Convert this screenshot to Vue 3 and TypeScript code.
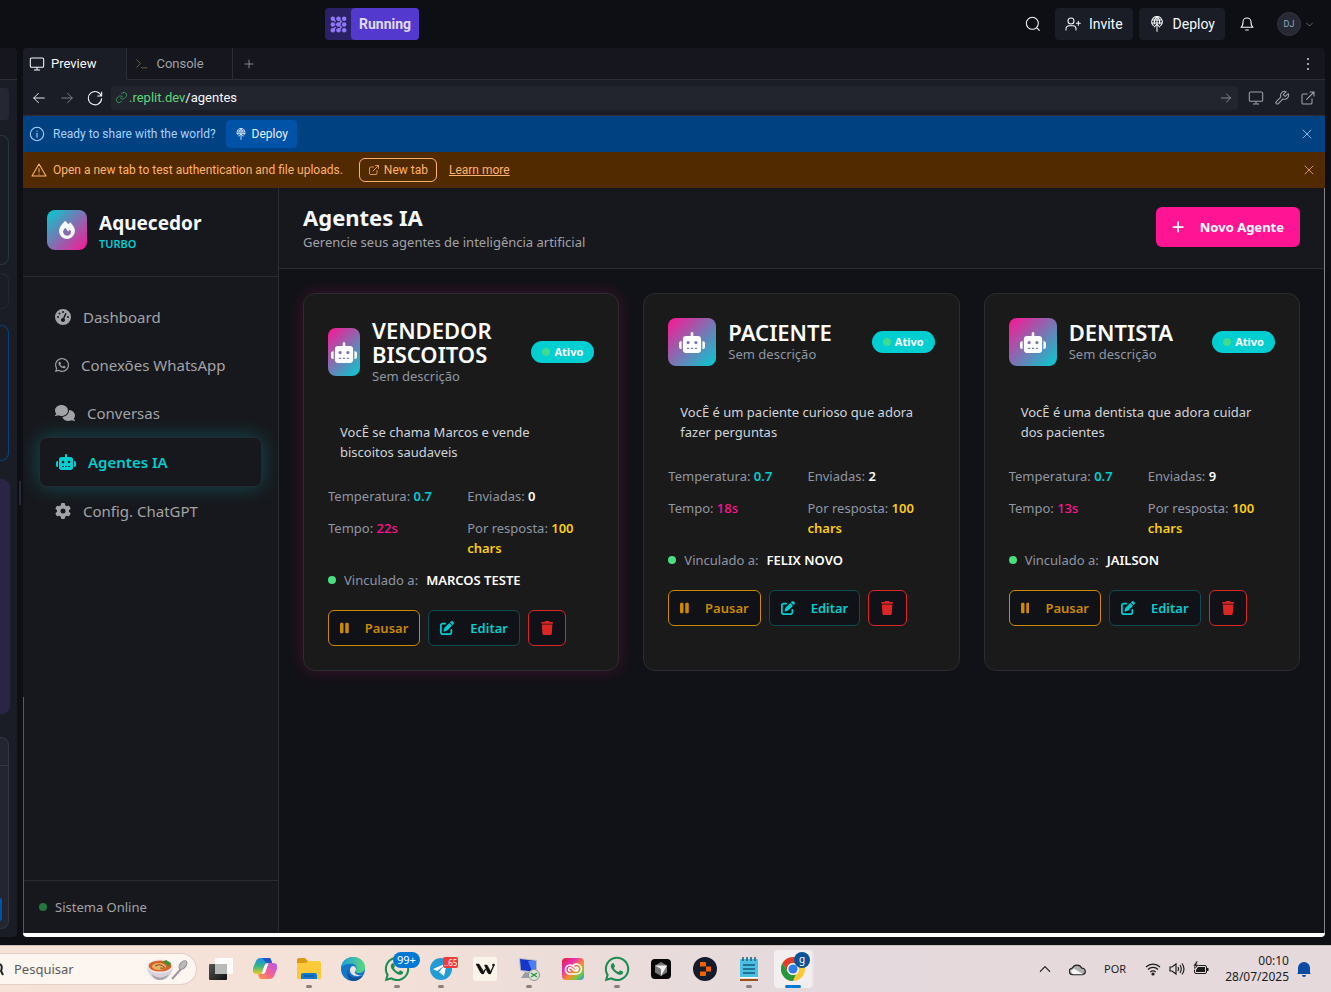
<script setup lang="ts">
import { h, ref } from 'vue'

type IconDef = { w: number; d: string }

const solid: Record<string, IconDef> = {
  robot: { w: 640, d: 'M320 0c17.7 0 32 14.3 32 32V96H472c39.8 0 72 32.2 72 72V440c0 39.8-32.2 72-72 72H168c-39.8 0-72-32.2-72-72V168c0-39.8 32.2-72 72-72H288V32c0-17.7 14.3-32 32-32zM208 384c-8.8 0-16 7.2-16 16s7.2 16 16 16h32c8.8 0 16-7.2 16-16s-7.2-16-16-16H208zm96 0c-8.8 0-16 7.2-16 16s7.2 16 16 16h32c8.8 0 16-7.2 16-16s-7.2-16-16-16H304zm96 0c-8.8 0-16 7.2-16 16s7.2 16 16 16h32c8.8 0 16-7.2 16-16s-7.2-16-16-16H400zM264 256a40 40 0 1 0 -80 0 40 40 0 1 0 80 0zm152 40a40 40 0 1 0 0-80 40 40 0 1 0 0 80zM48 224H64V416H48c-26.5 0-48-21.5-48-48V272c0-26.5 21.5-48 48-48zm544 0c26.5 0 48 21.5 48 48v96c0 26.5-21.5 48-48 48H576V224h16z' },
  whatsapp: { w: 448, d: 'M380.9 97.1C339 55.1 283.2 32 223.9 32c-122.4 0-222 99.6-222 222 0 39.1 10.2 77.3 29.6 111L0 480l117.7-30.9c32.4 17.7 68.9 27 106.1 27h.1c122.3 0 224.1-99.6 224.1-222 0-59.3-25.2-115-67.1-157zm-157 341.6c-33.2 0-65.7-8.9-94-25.7l-6.7-4-69.8 18.3L72 359.2l-4.4-7c-18.5-29.4-28.2-63.3-28.2-98.2 0-101.7 82.8-184.5 184.6-184.5 49.3 0 95.6 19.2 130.4 54.1 34.8 34.9 56.2 81.2 56.1 130.5 0 101.8-84.9 184.6-186.6 184.6zm101.2-138.2c-5.5-2.8-32.8-16.2-37.9-18-5.1-1.9-8.8-2.8-12.5 2.8-3.7 5.6-14.3 18-17.6 21.8-3.2 3.7-6.5 4.2-12 1.4-32.6-16.3-54-29.1-75.5-66-5.7-9.8 5.7-9.1 16.3-30.3 1.8-3.7.9-6.9-.5-9.7-1.4-2.8-12.5-30.1-17.1-41.2-4.5-10.8-9.1-9.3-12.5-9.5-3.2-.2-6.9-.2-10.6-.2-3.7 0-9.7 1.4-14.8 6.9-5.1 5.6-19.4 19-19.4 46.3 0 27.3 19.9 53.7 22.6 57.4 2.8 3.7 39.1 59.7 94.8 83.8 35.2 15.2 49 16.5 66.6 13.9 10.7-1.6 32.8-13.4 37.4-26.4 4.6-13 4.6-24.1 3.2-26.4-1.3-2.5-5-3.9-10.5-6.6z' },
  comments: { w: 640, d: 'M208 352c114.9 0 208-78.8 208-176S322.9 0 208 0S0 78.8 0 176c0 38.6 14.7 74.3 39.6 103.4c-3.5 9.4-8.7 17.7-14.2 24.7c-4.8 6.2-9.7 11-13.3 14.3c-1.8 1.6-3.3 2.9-4.3 3.7c-.5 .4-.9 .7-1.1 .8l-.2 .2C1 327.2-1.4 334.4 .8 340.9S9.1 352 16 352c21.8 0 43.8-5.6 62.1-12.5c9.2-3.5 17.8-7.4 25.3-11.4C134.1 343.3 169.8 352 208 352zM448 176c0 112.3-99.1 196.9-216.5 207C255.8 457.4 336.4 512 432 512c38.2 0 73.9-8.7 104.7-23.9c7.5 4 16 7.9 25.2 11.4c18.3 6.9 40.3 12.5 62.1 12.5c6.9 0 13.1-4.5 15.2-11.1c2.1-6.6-.2-13.8-5.8-17.9l-.2-.2c-.2-.2-.6-.4-1.1-.8c-1-.8-2.5-2-4.3-3.7c-3.6-3.3-8.5-8.1-13.3-14.3c-5.5-7-10.7-15.4-14.2-24.7c24.9-29 39.6-64.7 39.6-103.4c0-92.8-84.9-168.9-192.6-175.5c.4 5.1 .6 10.3 .6 15.5z' },
  gear: { w: 512, d: 'M495.9 166.6c3.2 8.7 .5 18.4-6.4 24.6l-43.3 39.4c1.1 8.3 1.7 16.8 1.7 25.4s-.6 17.1-1.7 25.4l43.3 39.4c6.9 6.2 9.6 15.9 6.4 24.6c-4.4 11.9-9.7 23.3-15.8 34.3l-4.7 8.1c-6.6 11-14 21.4-22.1 31.2c-5.9 7.2-15.7 9.6-24.5 6.8l-55.7-17.7c-13.4 10.3-28.2 18.9-44 25.4l-12.5 57.1c-2 9.1-9 16.3-18.2 17.8c-13.8 2.3-28 3.5-42.5 3.5s-28.7-1.2-42.5-3.5c-9.2-1.5-16.2-8.7-18.2-17.8l-12.5-57.1c-15.8-6.5-30.6-15.1-44-25.4L83.1 425.9c-8.8 2.8-18.6 .3-24.5-6.8c-8.1-9.8-15.5-20.2-22.1-31.2l-4.7-8.1c-6.1-11-11.4-22.4-15.8-34.3c-3.2-8.7-.5-18.4 6.4-24.6l43.3-39.4C64.6 273.1 64 264.6 64 256s.6-17.1 1.7-25.4L22.4 191.2c-6.9-6.2-9.6-15.9-6.4-24.6c4.4-11.9 9.7-23.3 15.8-34.3l4.7-8.1c6.6-11 14-21.4 22.1-31.2c5.9-7.2 15.7-9.6 24.5-6.8l55.7 17.7c13.4-10.3 28.2-18.9 44-25.4l12.5-57.1c2-9.1 9-16.3 18.2-17.8C227.3 1.2 241.5 0 256 0s28.7 1.2 42.5 3.5c9.2 1.5 16.2 8.7 18.2 17.8l12.5 57.1c15.8 6.5 30.6 15.1 44 25.4l55.7-17.7c8.8-2.8 18.6-.3 24.5 6.8c8.1 9.8 15.5 20.2 22.1 31.2l4.7 8.1c6.1 11 11.4 22.4 15.8 34.3zM256 336a80 80 0 1 0 0-160 80 80 0 1 0 0 160z' },
  gauge: { w: 512, d: 'M0 256a256 256 0 1 1 512 0A256 256 0 1 1 0 256zM288 96a32 32 0 1 0 -64 0 32 32 0 1 0 64 0zM256 416c35.3 0 64-28.7 64-64c0-17.4-6.9-33.1-18.1-44.6L366 161.7c5.3-12.1-.2-26.3-12.3-31.6s-26.3 .2-31.6 12.3L257.9 288c-.6 0-1.3 0-1.9 0c-35.3 0-64 28.7-64 64s28.7 64 64 64zM176 144a32 32 0 1 0 -64 0 32 32 0 1 0 64 0zM96 288a32 32 0 1 0 0-64 32 32 0 1 0 0 64zm352-32a32 32 0 1 0 -64 0 32 32 0 1 0 64 0z' },
  plus: { w: 448, d: 'M256 80c0-17.7-14.3-32-32-32s-32 14.3-32 32V224H48c-17.7 0-32 14.3-32 32s14.3 32 32 32H192V432c0 17.7 14.3 32 32 32s32-14.3 32-32V288H400c17.7 0 32-14.3 32-32s-14.3-32-32-32H256V80z' },
  pause: { w: 320, d: 'M48 64C21.5 64 0 85.5 0 112V400c0 26.5 21.5 48 48 48H80c26.5 0 48-21.5 48-48V112c0-26.5-21.5-48-48-48H48zm192 0c-26.5 0-48 21.5-48 48V400c0 26.5 21.5 48 48 48h32c26.5 0 48-21.5 48-48V112c0-26.5-21.5-48-48-48H240z' },
  trash: { w: 448, d: 'M135.2 17.7L128 32H32C14.3 32 0 46.3 0 64S14.3 96 32 96H416c17.7 0 32-14.3 32-32s-14.3-32-32-32H320l-7.2-14.3C307.4 6.8 296.3 0 284.2 0H163.8c-12.1 0-23.2 6.8-28.6 17.7zM416 128H32L53.2 467c1.6 25.3 22.6 45 47.9 45H346.9c25.3 0 46.3-19.7 47.9-45L416 128z' },
  edit: { w: 512, d: 'M471.6 21.7c-21.9-21.9-57.3-21.9-79.2 0L362.3 51.7l97.9 97.9 30.1-30.1c21.9-21.9 21.9-57.3 0-79.2L471.6 21.7zm-299.2 220c-6.1 6.1-10.8 13.6-13.5 21.9l-29.6 88.8c-2.9 8.6-.6 18.1 5.8 24.6s15.9 8.7 24.6 5.8l88.8-29.6c8.2-2.7 15.7-7.4 21.9-13.5L437.7 172.3 339.7 74.3 172.4 241.7zM96 64C43 64 0 107 0 160V416c0 53 43 96 96 96H352c53 0 96-43 96-96V320c0-17.7-14.3-32-32-32s-32 14.3-32 32v96c0 17.7-14.3 32-32 32H96c-17.7 0-32-14.3-32-32V160c0-17.7 14.3-32 32-32h96c17.7 0 32-14.3 32-32s-14.3-32-32-32H96z' },
  fire: { w: 448, d: 'M159.3 5.4c7.8-7.3 19.9-7.2 27.7 .1c27.6 25.9 53.5 53.8 77.7 84c11-14.4 23.5-30.1 37-42.9c7.9-7.4 20.1-7.4 28 .1c34.6 33 63.9 76.6 84.5 118c20.3 40.8 33.8 82.5 33.8 111.9C448 404.2 348.2 512 224 512C98.4 512 0 404.1 0 276.5c0-38.4 17.8-85.3 45.4-131.7C73.3 97.7 112.7 48.6 159.3 5.4zM225.7 416c25.3 0 47.7-7 68.8-21c42.1-29.4 53.4-88.2 28.1-134.4c-4.5-9-16-9.6-22.5-2l-25.2 29.3c-6.6 7.6-18.5 7.4-24.7-.5c-16.5-21-46-58.5-62.8-79.8c-6.3-8-18.3-8.1-24.7-.1c-33.8 42.5-50.8 69.3-50.8 99.4C112 375.4 162.6 416 225.7 416z' },
}

const outline: Record<string, string> = {
  monitor: 'M4 3h16a2 2 0 0 1 2 2v10a2 2 0 0 1-2 2H4a2 2 0 0 1-2-2V5a2 2 0 0 1 2-2zM8 21h8M12 17v4',
  prompt: 'M3 5l7 7-7 7M12 20h10',
  plus: 'M12 4v16M4 12h16',
  back: 'M21 12H3M11 4l-8 8 8 8',
  forward: 'M3 12h18M13 4l8 8-8 8',
  reload: 'M22 3v6h-6M21.500 9A10 10 0 1 0 22 13',
  link: 'M10 13a5 5 0 0 0 7.5.5l3-3a5 5 0 0 0-7-7l-1.8 1.7M14 11a5 5 0 0 0-7.500-.5l-3 3a5 5 0 0 0 7 7l1.700-1.700',
  wrench: 'M14.500 6.300a1 1 0 0 0 0 1.400l1.600 1.600a1 1 0 0 0 1.400 0l3.800-3.800a6 6 0 0 1-7.900 7.900L6.500 20.300a2.100 2.100 0 0 1-3-3l6.900-6.900a6 6 0 0 1 7.900-7.900z',
  external: 'M15 3h6v6M10 14L21 3M18 13v6a2 2 0 0 1-2 2H5a2 2 0 0 1-2-2V8a2 2 0 0 1 2-2h6',
  info: 'M12 2a10 10 0 1 0 0 20 10 10 0 0 0 0-20zM12 11v6M12 7.500v.5',
  warning: 'M12 3L1.500 21h21zM12 10v5M12 18v.5',
  close: 'M4 4l16 16M20 4L4 20',
  search: 'M11 2a9 9 0 1 0 0 18 9 9 0 0 0 0-18zM17.500 17.500l4 4',
  invite: 'M9 3a4.500 4.500 0 1 0 0 9 4.500 4.500 0 0 0 0-9zM1.500 21v-2a4.500 4.500 0 0 1 4.500-4.500h6a4.500 4.500 0 0 1 4.500 4.500v2M20 8v6M17 11h6',
  bell: 'M6 9a6 6 0 0 1 12 0c0 6 3 8 3 8H3s3-2 3-8M10 21h4',
  deploy: 'M6.500 14.500a8 8 0 1 1 11 0M5 6h14M4 10.500h16M12 1c-3 2-4.500 6-4 11M12 1c3 2 4.500 6 4 11M12 1v22M12 12l-4 4.500M12 12l4 4.500',
  chevronDown: 'M4 8l8 8 8-8',
  chevronUp: 'M4 16l8-8 8 8',
}

const Fa = (props: { name: string }) => {
  const icon = solid[props.name]
  return h('svg', { class: 'fa', viewBox: `0 0 ${icon.w} 512`, fill: 'currentColor', 'aria-hidden': 'true' }, [h('path', { d: icon.d })])
}
Fa.props = ['name']

const Line = (props: { name: string }) =>
  h('svg', { class: 'line', viewBox: '0 0 24 24', fill: 'none', stroke: 'currentColor', 'stroke-width': 1.6, 'stroke-linecap': 'round', 'stroke-linejoin': 'round', 'aria-hidden': 'true' }, [h('path', { d: outline[props.name] })])
Line.props = ['name']

const path = ref('/agentes')
const query = ref('')

const nav = [
  { label: 'Dashboard', icon: 'gauge', active: false },
  { label: 'Conexões WhatsApp', icon: 'whatsapp', active: false },
  { label: 'Conversas', icon: 'comments', active: false },
  { label: 'Agentes IA', icon: 'robot', active: true },
  { label: 'Config. ChatGPT', icon: 'gear', active: false },
]

const agents = [
  { name: 'VENDEDOR BISCOITOS', prompt: 'VocÊ se chama Marcos e vende biscoitos saudaveis', sent: 0, delay: '22s', linked: 'MARCOS TESTE', glow: true },
  { name: 'PACIENTE', prompt: 'VocÊ é um paciente curioso que adora fazer perguntas', sent: 2, delay: '18s', linked: 'FELIX NOVO', glow: false },
  { name: 'DENTISTA', prompt: 'VocÊ é uma dentista que adora cuidar dos pacientes', sent: 9, delay: '13s', linked: 'JAILSON', glow: false },
]

const dots = [0, 1, 2, 3, 4, 5, 6, 7, 8].map((i) => ({ x: 3 + (i % 3) * 6, y: 3 + Math.floor(i / 3) * 6 }))
</script>

<template>
  <div class="screen">
    <header class="topbar">
      <div class="run">
        <span class="run-mark">
          <svg viewBox="0 0 18 18" aria-hidden="true">
            <circle v-for="(d, i) in dots" :key="i" :cx="d.x" :cy="d.y" r="2.400" fill="#8f78f5" />
            <path d="M3 3l3 3M9 3l3 3-3 3 3 3-3 3M6 9l3 0M3 15l3-3" stroke="#8f78f5" stroke-width="1.500" fill="none" />
          </svg>
        </span>
        <button class="run-label" type="button">Running</button>
      </div>
      <div class="top-actions">
        <button class="ghost" type="button" aria-label="Search"><Line name="search" /></button>
        <button class="action" type="button"><Line name="invite" />Invite</button>
        <button class="action" type="button"><Line name="deploy" />Deploy</button>
        <button class="ghost bell" type="button" aria-label="Notifications"><Line name="bell" /></button>
        <button class="account" type="button"><span class="avatar">DJ</span><Line name="chevronDown" /></button>
      </div>
    </header>

    <div class="workspace">
      <aside class="strip">
        <div class="strip-head"></div>
        <div class="strip-body">
          <div class="piece field"></div>
          <div class="piece green"></div>
          <div class="piece small"></div>
          <div class="piece blue"></div>
          <div class="piece purple"></div>
          <div class="piece composer"><div class="composer-head"></div><div class="send"></div></div>
        </div>
      </aside>
      <div class="handle"></div>

      <section class="pane">
        <div class="tabs">
          <button class="tab on" type="button"><Line name="monitor" />Preview</button>
          <button class="tab console" type="button"><Line name="prompt" />Console</button>
          <button class="tab-add" type="button" aria-label="New tab"><Line name="plus" /></button>
          <button class="tab-more" type="button" aria-label="More">
            <svg viewBox="0 0 16 16" fill="currentColor"><rect x="7" y="2" width="2" height="2" /><rect x="7" y="7" width="2" height="2" /><rect x="7" y="12" width="2" height="2" /></svg>
          </button>
        </div>

        <div class="toolbar">
          <button class="tool" type="button" aria-label="Back"><Line name="back" /></button>
          <button class="tool dim" type="button" aria-label="Forward"><Line name="forward" /></button>
          <button class="tool reload" type="button" aria-label="Reload"><Line name="reload" /></button>
          <div class="address">
            <Line name="link" />
            <label for="address-path">.replit.dev</label>
            <input id="address-path" v-model="path" type="text" />
            <button class="go" type="button" aria-label="Go"><Line name="forward" /></button>
          </div>
          <button class="tool end" type="button" aria-label="Device"><Line name="monitor" /></button>
          <button class="tool end" type="button" aria-label="Tools"><Line name="wrench" /></button>
          <button class="tool end" type="button" aria-label="Open"><Line name="external" /></button>
        </div>

        <div class="banner info">
          <Line name="info" />
          <span>Ready to share with the world?</span>
          <button class="banner-deploy" type="button"><Line name="deploy" />Deploy</button>
          <button class="dismiss" type="button" aria-label="Close"><Line name="close" /></button>
        </div>
        <div class="banner warn">
          <Line name="warning" />
          <span>Open a new tab to test authentication and file uploads.</span>
          <button class="banner-tab" type="button"><Line name="external" />New tab</button>
          <a href="#">Learn more</a>
          <button class="dismiss" type="button" aria-label="Close"><Line name="close" /></button>
        </div>

        <div class="app">
          <aside class="sidebar">
            <div class="brand">
              <div class="brand-mark"><Fa name="fire" /></div>
              <div>
                <div class="brand-name">Aquecedor</div>
                <div class="brand-sub">TURBO</div>
              </div>
            </div>
            <nav class="nav">
              <a v-for="item in nav" :key="item.label" href="#" class="nav-item" :class="{ active: item.active }">
                <Fa :name="item.icon" />{{ item.label }}
              </a>
            </nav>
            <div class="status"><span class="dot"></span>Sistema Online</div>
          </aside>

          <main class="main">
            <div class="page-head">
              <div>
                <h1>Agentes IA</h1>
                <p>Gerencie seus agentes de inteligência artificial</p>
              </div>
              <button class="new" type="button"><Fa name="plus" />Novo Agente</button>
            </div>
            <div class="cards">
              <article v-for="a in agents" :key="a.name" class="card" :class="{ glow: a.glow }">
                <div class="card-head">
                  <div class="bot"><Fa name="robot" /></div>
                  <div class="card-title">
                    <h2>{{ a.name }}</h2>
                    <p>Sem descrição</p>
                  </div>
                  <span class="badge"><span class="dot"></span>Ativo</span>
                </div>
                <p class="prompt">{{ a.prompt }}</p>
                <div class="stats">
                  <div>Temperatura: <b class="teal">0.7</b></div>
                  <div>Enviadas: <b>{{ a.sent }}</b></div>
                  <div>Tempo: <b class="pink">{{ a.delay }}</b></div>
                  <div>Por resposta: <b class="gold">100</b> <b class="gold">chars</b></div>
                </div>
                <div class="linked"><span class="dot"></span>Vinculado a: <b>{{ a.linked }}</b></div>
                <div class="buttons">
                  <button class="btn pausar" type="button"><Fa name="pause" />Pausar</button>
                  <button class="btn editar" type="button"><Fa name="edit" />Editar</button>
                  <button class="btn remove" type="button" aria-label="Excluir"><Fa name="trash" /></button>
                </div>
              </article>
            </div>
          </main>
        </div>
      </section>
    </div>

    <footer class="taskbar">
      <div class="find">
        <svg class="lens" viewBox="0 0 4 16" aria-hidden="true"><path d="M0 3q3 2 1 7l2 4" stroke="#222" stroke-width="2" fill="none" /></svg>
        <input v-model="query" type="text" placeholder="Pesquisar" aria-label="Pesquisar" />
        <svg class="soup" viewBox="0 0 42 24" aria-hidden="true">
          <path d="M1 9c0 8 6 14 13 14s13-6 13-14z" fill="#d8d3da" />
          <path d="M6 17c3 4 12 5 17 0-2 4-5 6-9 6s-7-2-8-6z" fill="#a9a3b0" />
          <ellipse cx="14" cy="9" rx="13" ry="7" fill="#f0edf0" />
          <ellipse cx="14" cy="9" rx="11.500" ry="5.500" fill="#d9622a" />
          <ellipse cx="13" cy="9.500" rx="7" ry="3.500" fill="#e8b268" />
          <path d="M9 9q4-3 8 0t-3 2" stroke="#8b4a1d" fill="none" />
          <path d="M16 5l4-2 5 3-2 4-3-3z" fill="#4c8b33" />
          <path d="M26 22l9-10" stroke="#9b989c" stroke-width="2" />
          <ellipse cx="37" cy="8" rx="3" ry="5" transform="rotate(40 37 8)" fill="#bcb8bc" stroke="#8e8b90" />
        </svg>
      </div>
      <div class="dock">
        <button class="dock-item" type="button" aria-label="Task view">
          <svg viewBox="0 0 24 24"><defs><linearGradient id="tv" x2="1" y2="1"><stop stop-color="#555" /><stop offset="1" stop-color="#111" /></linearGradient></defs><rect y="7" width="18" height="16" rx="1" fill="url(#tv)" /><rect x="6" y="1" width="18" height="16" rx="1" fill="#fff" opacity=".9" /><rect x="6" y="7" width="12" height="10" fill="#b9b9b9" /></svg>
        </button>
        <button class="dock-item" type="button" aria-label="Copilot">
          <svg viewBox="0 0 24 24">
            <defs>
              <linearGradient id="ca" x2="0" y2="1"><stop stop-color="#1a8df0" /><stop offset=".5" stop-color="#35b58a" /><stop offset="1" stop-color="#f2cf1d" /></linearGradient>
              <linearGradient id="cb" x1="1" x2="0" y2="1"><stop stop-color="#b05cf0" /><stop offset=".5" stop-color="#ef5f9a" /><stop offset="1" stop-color="#ff9a3c" /></linearGradient>
            </defs>
            <path d="M8 1h8c2 0 2 2 3 5h-4c-2 0-3 1-4 4l-2 6c-1 2-3 1-5 1-4 0-5-3-4-6l3-7c1-2 2-3 5-3z" fill="url(#ca)" />
            <path d="M9 1h7c2 0 2 2 3 5h-4c-3 0-3-3-6-5z" fill="#1f55c8" />
            <path d="M16 22H8c-2 0-2-2-3-5h4c2 0 3-1 4-4l2-6c1-2 3-1 5-1 4 0 5 3 4 6l-3 7c-1 2-2 3-5 3z" fill="url(#cb)" />
            <path d="M10 13l2-5 3-1-3 9-3 1z" fill="#fff" />
          </svg>
        </button>
        <button class="dock-item open" type="button" aria-label="Explorer">
          <svg viewBox="0 0 24 24"><path d="M0 3a2 2 0 0 1 2-2h6l3 3h11v6H0z" fill="#d99a12" /><path d="M0 6h9l2-2h11a2 2 0 0 1 2 2v16H0z" fill="#fcc93a" /><path d="M4 22v-4a2 2 0 0 1 2-2h12a2 2 0 0 1 2 2v4z" fill="#1578c8" /><path d="M7 19h10" stroke="#0b4f94" /></svg>
        </button>
        <button class="dock-item" type="button" aria-label="Edge">
          <svg viewBox="0 0 24 24">
            <defs><linearGradient id="eg" x2="1"><stop stop-color="#1c9ee0" /><stop offset="1" stop-color="#5bd97a" /></linearGradient></defs>
            <circle cx="12" cy="12" r="12" fill="#1576c6" />
            <path d="M0 12C0 5 5 0 12 0s12 5 12 10c0 4-3 6-6 6-4 0-4-2-3-3 2-4-2-7-6-6-5 0-9 2-9 5z" fill="url(#eg)" />
            <path d="M8 11c-3 6 3 11 9 9 2 0 4-1 5-2-2 4-6 6-10 6C6 24 5 13 8 11z" fill="#124e94" />
            <path d="M12 9c-4 1-4 7 0 9 3 2 7 1 10 0-3 1-7 0-8-2-1-1 1-2 1-4 0-1-1-3-3-3z" fill="#eee3df" />
          </svg>
        </button>
        <button class="dock-item open" type="button" aria-label="WhatsApp">
          <Fa name="whatsapp" class="wa" /><span class="count">99+</span>
        </button>
        <button class="dock-item open" type="button" aria-label="Telegram">
          <svg viewBox="0 0 24 24"><circle cx="12" cy="12" r="11" fill="#239bd4" /><path d="M4 12l14-6-3 13-5-4 5-6-7 5z" fill="#fff" /></svg>
          <span class="count red">..65</span>
        </button>
        <button class="dock-item" type="button" aria-label="W">
          <svg viewBox="0 0 24 24"><rect width="24" height="24" rx="2" fill="#faf4ea" /><path d="M3 7h3l5 8-1 2c-1 0-2-.5-2.500-1.500zM11.500 8H14l4 7-1 2c-1 0-2-.5-2.500-1.500z" fill="#111" stroke="#111" stroke-width=".5" /><path d="M10 17l2.500-5M17 17l3.500-8" stroke="#111" stroke-width="1.300" /><circle cx="20.500" cy="8" r="1.300" fill="#111" /></svg>
        </button>
        <button class="dock-item open" type="button" aria-label="Remote desktop">
          <svg viewBox="0 0 24 24"><path d="M2 1l18 2v13L3 14z" fill="#b9bcc6" /><path d="M3 2l16 2v11L4 13z" fill="#1536c8" /><path d="M11 4l8 0v11l-4-1z" fill="#4a7df0" /><path d="M8 15l6 1 1 5H4z" fill="#9a9da6" /><circle cx="17" cy="18" r="5.500" fill="#dfe3df" stroke="#8c938c" /><path d="M14 16l3 2-3 2M20 16l-3 2 3 2" stroke="#349a3e" fill="none" stroke-width="1.500" /></svg>
        </button>
        <button class="dock-item" type="button" aria-label="Creative Cloud">
          <svg viewBox="0 0 24 24"><defs><linearGradient id="cc" x2="1" y2="1"><stop stop-color="#e8202a" /><stop offset=".3" stop-color="#e62db0" /><stop offset=".6" stop-color="#f5922a" /><stop offset=".8" stop-color="#6ccb4a" /><stop offset="1" stop-color="#2d8cf0" /></linearGradient></defs><rect x="1" y="1" width="22" height="22" rx="4" fill="url(#cc)" /><path d="M9 17a4.500 4.500 0 0 1 0-9c2 0 3 1 4.500 2.500l3 3M9 17h6.500a5 5 0 1 0-4-8M9 14a1.800 1.800 0 0 1 0-3.500c2 0 3 3.500 6 3.500a2 2 0 0 0 0-4" stroke="#fff" stroke-width="1.600" fill="none" stroke-linecap="round" /></svg>
        </button>
        <button class="dock-item open" type="button" aria-label="WhatsApp 2"><Fa name="whatsapp" class="wa" /></button>
        <button class="dock-item" type="button" aria-label="Cursor">
          <svg viewBox="0 0 24 24"><rect x="2" y="2" width="20" height="20" rx="4" fill="#080808" /><path d="M12 5l6 3.500v7L12 19l-6-3.500v-7z" fill="#777" /><path d="M6 8.500h12L12 19v-7z" fill="#f0f0f0" /></svg>
        </button>
        <button class="dock-item" type="button" aria-label="Replit">
          <svg viewBox="0 0 24 24"><circle cx="12" cy="12" r="12" fill="#141b2b" /><path d="M7 5h5a1 1 0 0 1 1 1v3.500H7zM13 9.500h5v5h-5zM7 14.500h6V18a1 1 0 0 1-1 1H7z" fill="#f26207" /></svg>
        </button>
        <button class="dock-item open" type="button" aria-label="Notepad">
          <svg viewBox="0 0 24 24"><rect x="3" y="2" width="18" height="19" rx="1" fill="#4cc0e2" /><path d="M6 0v4M10 0v4M14 0v4M18 0v4" stroke="#1b5f7c" stroke-width="1.500" /><path d="M6 8h12M6 12h12M6 16h12" stroke="#13597a" stroke-width="1.500" /><path d="M3 20h18v1H3z" fill="#fff" /><path d="M3 22h18v2H3z" fill="#9c5117" /></svg>
        </button>
        <button class="dock-item current" type="button" aria-label="Chrome">
          <svg viewBox="0 0 24 24"><circle cx="12" cy="12" r="12" fill="#fcc934" /><path d="M12 0a12 12 0 0 1 10.400 6H12a6 6 0 0 0-5.200 9L1.600 6A12 12 0 0 1 12 0z" fill="#e33b2e" /><path d="M1.600 6l5.200 9a6 6 0 0 0 5.200 3l2.600-.6L12 24A12 12 0 0 1 1.600 6z" fill="#27973f" /><circle cx="12" cy="12" r="6" fill="#fff" /><circle cx="12" cy="12" r="4.600" fill="#2f7bea" /></svg>
          <span class="count profile">g</span>
        </button>
      </div>
      <div class="tray">
        <button class="tray-btn" type="button" aria-label="Mostrar ícones"><Line name="chevronUp" class="up" /></button>
        <svg class="cloud" viewBox="0 0 18 14" aria-hidden="true"><path d="M4 13a3.500 3.500 0 0 1-.500-7A5.500 5.500 0 0 1 13.500 6a3.500 3.500 0 0 1 .5 7z" fill="#aeaeae" stroke="#222" stroke-width="1.300" /><path d="M2 9l3-2.500 10 6H4z" fill="#f6f6f6" /></svg>
        <span class="lang">POR</span>
        <div class="net">
          <svg viewBox="0 0 16 16" fill="none" stroke="#1c1c1c" stroke-width="1.200" aria-hidden="true"><path d="M1 6a10 10 0 0 1 14 0M3 8.500a7 7 0 0 1 10 0M5.300 11a4 4 0 0 1 5.400 0" /><circle cx="8" cy="13" r="1" fill="#1c1c1c" /></svg>
          <svg viewBox="0 0 16 16" fill="none" stroke="#1c1c1c" stroke-width="1.200" aria-hidden="true"><path d="M1 6v4h2l4 3V3L3 6zM9 6q1 2 0 4M11 4q2.500 4 0 8M13 2.500q4 5.500 0 11" /></svg>
          <svg viewBox="0 0 16 16" aria-hidden="true"><rect x="1.500" y="4.500" width="12" height="8" rx="1.500" fill="none" stroke="#1c1c1c" /><path d="M5 6h7v5H3V9z" fill="#1c1c1c" /><path d="M14 7h1.500v3H14z" fill="#1c1c1c" /><path d="M3.500 0L0 5h2.500L1 9l5-5.500H3.500L5 0z" fill="#1c1c1c" stroke="#e6d9dc" stroke-width=".5" /></svg>
        </div>
        <div class="clock"><span>00:10</span><span>28/07/2025</span></div>
        <svg class="alert" viewBox="0 0 16 16" aria-hidden="true"><path d="M2 12V7a6 6 0 0 1 12 0v5l1 1H1zM6 14h4a2 2 0 0 1-4 0z" fill="#0a4aa0" /></svg>
      </div>
    </footer>
  </div>
</template>

<style>
html,
body {
  margin: 0;
  background: #0e0e15;
}
</style>

<style scoped>
.screen {
  display: flex;
  flex-direction: column;
  min-height: 100vh;
  background: #0e0e15;
  color: #f5f9fc;
  font: 13px/20px 'Noto Sans', 'Open Sans', sans-serif;
  overflow: hidden;
}
.screen *,
.screen *::before,
.screen *::after {
  box-sizing: border-box;
}
button,
input {
  margin: 0;
  padding: 0;
  border: 0;
  background: none;
  color: inherit;
  font: inherit;
  outline: none;
}
button {
  display: flex;
  align-items: center;
  justify-content: center;
  flex: none;
}
h1,
h2,
p {
  margin: 0;
}
svg {
  flex: none;
  display: block;
}
.line {
  width: 16px;
  height: 16px;
}
.dot {
  width: 8px;
  height: 8px;
  border-radius: 50%;
  background: #4ade80;
  flex: none;
}

/* Top bar */
.topbar {
  display: flex;
  align-items: center;
  justify-content: space-between;
  height: 48px;
  padding: 0 17px 0 325px;
  font-family: Roboto, sans-serif;
}
.run {
  display: flex;
  height: 32px;
  border-radius: 4px;
  background: #2b2166;
}
.run-mark {
  display: flex;
  align-items: center;
  padding: 0 4px 0 5px;
}
.run-mark svg {
  width: 17px;
  height: 17px;
}
.run-label {
  padding: 0 8px;
  border-radius: 4px;
  background: #5339cd;
  color: #e0daff;
  font-size: 14px;
  font-weight: 700;
}
.top-actions {
  display: flex;
  align-items: center;
  gap: 6px;
}
.ghost {
  width: 32px;
  height: 32px;
}
.action {
  height: 32px;
  padding: 0 10px;
  gap: 8px;
  border-radius: 4px;
  background: #1a1d25;
  font-size: 14px;
}
.bell {
  margin-right: 8px;
}
.account {
  gap: 4px;
  color: #9da2a6;
}
.account .line {
  width: 9px;
  height: 9px;
}
.avatar {
  width: 24px;
  height: 24px;
  border: 1px solid #34363f;
  border-radius: 50%;
  background: #262833;
  color: #92a7bd;
  font-size: 9px;
  line-height: 22px;
}

/* Workspace */
.workspace {
  display: flex;
  flex: 1;
  padding: 0 6px 8px 0;
}
.strip {
  display: flex;
  flex-direction: column;
  width: 17px;
  border-radius: 0 4px 4px 0;
  background: #1a1d26;
  overflow: hidden;
}
.strip-head {
  height: 32px;
  border-bottom: 1px solid #2b2e39;
  background: #15161e;
}
.strip-body {
  display: flex;
  flex: 1;
  flex-direction: column;
  align-items: flex-start;
  padding: 8px 0;
}
.piece {
  width: 9px;
  border: 1px solid #252833;
  border-left: 0;
  border-radius: 0 8px 8px 0;
}
.field {
  height: 32px;
  background: #252832;
  border-radius: 0 4px 4px 0;
}
.green {
  height: 130px;
  margin-top: 15px;
  border-color: #26393a;
}
.small {
  height: 36px;
  margin-top: 8px;
}
.blue {
  height: 136px;
  margin-top: 16px;
  border-color: #07417c;
}
.purple {
  width: 10px;
  height: 235px;
  margin-top: 18px;
  border: 0;
  background: #2a2547;
}
.composer {
  display: flex;
  flex: 1;
  flex-direction: column;
  justify-content: space-between;
  margin-top: 23px;
  padding-bottom: 7px;
  border-color: #343844;
  background: #232630;
}
.composer-head {
  height: 28px;
  border-bottom: 1px solid #343844;
}
.send {
  width: 2px;
  height: 23px;
  border-radius: 0 4px 4px 0;
  background: #0053a6;
}
.handle {
  align-self: center;
  width: 2px;
  height: 24px;
  margin: 0 2px;
  background: #262833;
}
.pane {
  position: relative;
  display: flex;
  flex: 1;
  flex-direction: column;
  min-width: 0;
  border-radius: 4px;
  border-bottom: 4px solid #fff;
  overflow: hidden;
}
.pane::before {
  content: '';
  position: absolute;
  z-index: 1;
  bottom: 0;
  left: 0;
  width: 1px;
  height: 236px;
  background: #595a5d;
}

/* Tabs and address row */
.tabs,
.toolbar,
.banner {
  font-family: Roboto, sans-serif;
}
.tabs {
  display: flex;
  height: 32px;
  background: #15161e;
  color: #9da2a6;
}
.tab {
  gap: 6px;
  padding: 0 28px 0 6px;
  border-right: 1px solid #2b2e39;
  border-bottom: 1px solid #2b2e39;
  font-size: 13px;
}
.tab.on {
  padding-right: 30px;
  border-bottom-color: #1a1d26;
  background: #1a1d26;
  color: #f5f9fc;
}
.console {
  padding-left: 8px;
  gap: 8px;
}
.console .line {
  width: 13px;
  height: 13px;
  color: #766b45;
}
.tab-add {
  width: 32px;
  border-bottom: 1px solid #2b2e39;
}
.tab-add .line {
  width: 12px;
  height: 12px;
}
.tab-more {
  flex: 1;
  justify-content: flex-end;
  padding-right: 9px;
  border-bottom: 1px solid #2b2e39;
}
.tab-more svg {
  width: 16px;
  height: 16px;
}
.toolbar {
  display: flex;
  align-items: center;
  height: 36px;
  padding: 0 9px 0 8px;
  border-bottom: 1px solid #2b2e39;
  background: #1a1d26;
}
.tool {
  width: 16px;
  height: 24px;
  margin-right: 12px;
}
.tool .line {
  width: 14px;
  height: 14px;
}
.tool.dim {
  color: #82868e;
}
.tool.reload {
  margin-right: 8px;
}
.tool.reload .line {
  width: 16px;
  height: 16px;
}
.tool.end {
  margin: 0 0 0 10px;
  color: #9da2a6;
}
.tool.end .line {
  width: 16px;
  height: 16px;
}
.address {
  display: flex;
  flex: 1;
  align-items: center;
  height: 24px;
  padding: 0 6px 0 4px;
  border-radius: 4px;
  background: #22252e;
  font-size: 13px;
}
.address > .line {
  width: 13px;
  height: 13px;
  margin-right: 1px;
  color: #3fa35b;
}
.address label {
  color: #5fd57c;
}
.address input {
  flex: 1;
  min-width: 0;
}
.go .line {
  width: 12px;
  height: 12px;
  color: #9da2a6;
}

/* Banners */
.banner {
  display: flex;
  align-items: center;
  height: 36px;
  padding: 0 12px 0 6px;
  font-size: 12px;
}
.banner > .line {
  width: 16px;
  height: 16px;
  margin-right: 8px;
}
.info {
  background: #004182;
  color: #a8d2ff;
}
.warn {
  padding: 0 10px 0 8px;
  background: #522a00;
  color: #ffb36b;
}
.warn > .line {
  margin-right: 6px;
}
.banner-deploy {
  height: 28px;
  margin-left: 10px;
  padding: 0 9px;
  gap: 5px;
  border-radius: 4px;
  background: #0053a6;
  color: #e6f2ff;
}
.banner-deploy .line,
.banner-tab .line {
  width: 12px;
  height: 12px;
}
.banner-tab {
  height: 24px;
  margin: 0 12px 0 16px;
  padding: 0 8px;
  gap: 4px;
  border: 1px solid #ffb36b;
  border-radius: 6px;
}
.banner a {
  color: inherit;
}
.dismiss {
  margin-left: auto;
}
.dismiss .line {
  width: 12px;
  height: 12px;
}

/* Embedded application */
.app {
  display: flex;
  flex: 1;
  border-right: 1px solid #85868a;
  background: #111217;
}
.sidebar {
  display: flex;
  flex-direction: column;
  width: 256px;
  border-right: 1px solid #2a2c33;
  background: #17181d;
}
.brand {
  display: flex;
  gap: 12px;
  padding: 22px 24px 24px;
  border-bottom: 1px solid #2a2c33;
}
.brand-mark {
  display: flex;
  align-items: center;
  justify-content: center;
  width: 40px;
  height: 40px;
  border-radius: 8px;
  background: linear-gradient(135deg, #00ced1, #ff1493);
}
.brand-mark .fa {
  width: 16px;
  height: 18px;
}
.brand-name {
  font-size: 19px;
  font-weight: 700;
  line-height: 26px;
}
.brand-sub {
  color: #00ced1;
  font-size: 11px;
  font-weight: 600;
  line-height: 16px;
}
.nav {
  display: flex;
  flex: 1;
  flex-direction: column;
  padding: 16px;
}
.nav-item {
  display: flex;
  align-items: center;
  gap: 12px;
  height: 48px;
  padding: 0 16px;
  color: #a2a3a6;
  font-size: 15px;
  text-decoration: none;
}
.nav-item .fa {
  height: 16px;
}
.nav-item.active {
  height: 50px;
  border: 1px solid #262a30;
  border-radius: 8px;
  background: #17181d;
  box-shadow: 0 0 20px rgba(0, 206, 209, 0.3);
  color: #00ced1;
  font-weight: 600;
}
.status {
  display: flex;
  align-items: center;
  gap: 8px;
  padding: 16px;
  border-top: 1px solid #2a2c33;
  color: #a2a3a6;
}
.status .dot {
  background: #22783f;
}
.main {
  flex: 1;
  min-width: 0;
}
.page-head {
  display: flex;
  align-items: center;
  justify-content: space-between;
  padding: 14px 24px 16px;
  border-bottom: 1px solid #2a2c33;
  background: #17181d;
}
.page-head h1 {
  font-size: 22px;
  font-weight: 700;
  line-height: 30px;
}
.page-head p {
  color: #a2a3a6;
}
.new {
  height: 40px;
  padding: 0 16px;
  gap: 16px;
  border-radius: 6px;
  background: #ff1493;
  color: #fff;
  font-weight: 700;
}
.new .fa {
  height: 14px;
}
.cards {
  display: grid;
  grid-template-columns: repeat(3, minmax(0, 1fr));
  gap: 24px;
  padding: 24px;
}
.card {
  padding: 24px;
  border: 1px solid #2c2d2f;
  border-radius: 12px;
  background: #1a1a1a;
  color: #8f96a3;
}
.card.glow {
  box-shadow: 0 0 16px rgba(255, 20, 147, 0.2);
}
.card-head {
  display: flex;
  align-items: center;
}
.bot {
  display: flex;
  align-items: center;
  justify-content: center;
  width: 48px;
  min-width: 32px;
  height: 48px;
  margin-right: 12px;
  border-radius: 8px;
  background: linear-gradient(135deg, #ff1493, #00ced1);
  color: #fff;
}
.glow .bot {
  width: 32px;
}
.bot .fa {
  width: 26px;
  height: 21px;
}
.card-title {
  flex: 1;
  min-width: 0;
}
.card-title h2 {
  color: #fff;
  font-size: 22px;
  font-weight: 600;
  line-height: 24px;
}
.badge {
  display: flex;
  align-items: center;
  gap: 4px;
  height: 22px;
  padding: 0 11px;
  border-radius: 11px;
  background: #00ced1;
  color: #fff;
  font-size: 11px;
  font-weight: 700;
}
.badge .dot {
  background: #3edb90;
}
.prompt {
  margin-top: 24px;
  padding: 12px;
  color: #d1d5db;
}
.stats {
  display: grid;
  grid-template-columns: 1fr 1fr;
  gap: 12px;
  margin-top: 12px;
}
b {
  color: #fff;
  font-weight: 600;
}
.teal {
  color: #00ced1;
}
.pink {
  color: #ff1493;
  font-weight: 500;
}
.gold {
  color: #facc15;
}
.linked {
  display: flex;
  align-items: center;
  gap: 8px;
  margin-top: 12px;
}
.buttons {
  display: flex;
  gap: 8px;
  margin-top: 20px;
}
.btn {
  height: 36px;
  padding: 0 11px;
  gap: 16px;
  border: 1px solid #0d4d51;
  border-radius: 6px;
  background: #111217;
  color: #00ced1;
  font-weight: 600;
}
.btn .fa {
  height: 14px;
}
.pausar {
  border-color: #ca8a04;
  color: #ca8a04;
}
.remove {
  padding: 0 12px;
  border-color: #dc2626;
  color: #dc2626;
}

/* Desktop taskbar */
.taskbar {
  display: flex;
  align-items: center;
  height: 47px;
  padding-right: 19px;
  border-top: 1px solid #cdbdbb;
  background: linear-gradient(90deg, #f6e2d7, #f4e1d8 26%, #e4d9dc 60%, #e6d9dc);
  color: #1c1c1c;
}
.find {
  display: flex;
  align-items: center;
  width: 197px;
  height: 32px;
  padding-right: 8px;
  border: 1px solid #e2d0c8;
  border-left: 0;
  border-radius: 0 16px 16px 0;
  background: #fcf5f0;
}
.lens {
  width: 4px;
  height: 16px;
}
.find input {
  flex: 1;
  min-width: 0;
  padding-left: 10px;
}
.find input::placeholder {
  color: #5c5a59;
  opacity: 1;
}
.soup {
  width: 42px;
  height: 24px;
}
.dock {
  display: flex;
  margin-left: 2px;
}
.dock-item {
  position: relative;
  width: 44px;
  height: 46px;
}
.dock-item > svg {
  width: 24px;
  height: 24px;
}
.dock-item.open::after,
.dock-item.current::after {
  content: '';
  position: absolute;
  bottom: 4px;
  left: 19px;
  width: 6px;
  height: 3px;
  border-radius: 2px;
  background: #8b807f;
}
.dock-item.current::before {
  content: '';
  position: absolute;
  inset: 4px 3px;
  border-radius: 4px;
  background: #f3eef0;
  box-shadow: 2px 0 #e9e2e4;
}
.dock-item.current::after {
  left: 14px;
  width: 16px;
  background: #0078d4;
}
.dock-item.current > svg {
  position: relative;
}
.dock-item .wa {
  width: 26px;
  height: 28px;
  color: #1d8c50;
}
.count {
  position: absolute;
  top: 6px;
  left: 18px;
  height: 16px;
  padding: 0 4px;
  border-radius: 8px;
  background: #0078d4;
  color: #fff;
  font-size: 11px;
  line-height: 16px;
}
.count.red {
  top: 11px;
  left: 24px;
  height: 11px;
  padding: 0 1px;
  border-radius: 2px;
  background: #f03a37;
  font-size: 8px;
  line-height: 11px;
}
.count.profile {
  left: 23px;
  width: 16px;
  background: #0b5394;
  font-size: 10px;
  line-height: 14px;
}
.tray {
  display: flex;
  align-items: center;
  margin-left: auto;
  font-size: 11px;
}
.up {
  width: 14px;
  height: 14px;
  stroke-width: 2;
}
.cloud {
  width: 17px;
  height: 14px;
  margin: 0 18px 0 17px;
}
.net {
  display: flex;
  gap: 8px;
  margin: 0 16px 0 19px;
}
.net svg,
.alert {
  width: 16px;
  height: 16px;
}
.clock {
  display: flex;
  flex-direction: column;
  align-items: flex-end;
  font-size: 12px;
  line-height: 16px;
}
.alert {
  margin-left: 7px;
}
</style>
